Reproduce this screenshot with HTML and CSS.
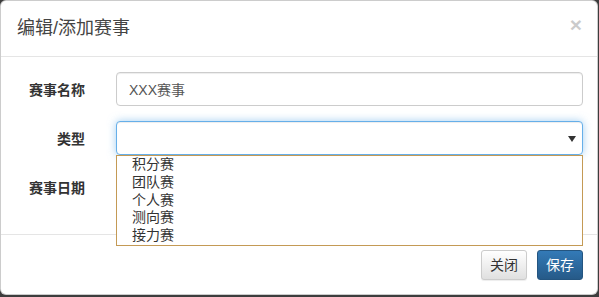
FILE: index.html
```html
<!DOCTYPE html>
<html lang="zh-CN">
<head>
  <meta charset="UTF-8">
  <title>编辑/添加赛事</title>
  <link rel="stylesheet" href="styles.css">
</head>
<body>
  <div class="modal">
    <div class="modal-header">
      <h4 class="modal-title">编辑/添加赛事</h4>
      <span class="close">&times;</span>
    </div>
    <form class="modal-body">
      <div class="form-group">
        <label class="control-label">赛事名称</label>
        <input class="form-control" type="text" value="XXX赛事">
      </div>
      <div class="form-group">
        <label class="control-label">类型</label>
        <div class="select-wrap">
          <div class="form-control focused"></div>
          <ul class="dropdown">
            <li>积分赛</li>
            <li>团队赛</li>
            <li>个人赛</li>
            <li>测向赛</li>
            <li>接力赛</li>
          </ul>
        </div>
      </div>
      <div class="form-group">
        <label class="control-label">赛事日期</label>
        <input class="form-control" type="text">
      </div>
    </form>
    <div class="modal-footer">
      <button class="btn btn-default" type="button">关闭</button>
      <button class="btn btn-primary" type="button">保存</button>
    </div>
  </div>
</body>
</html>
```

FILE: styles.css
```css
* {
  box-sizing: border-box;
}
body {
  margin: 0;
  padding: 0 1px 2px 0;
  background: #3d3d3d;
  font-family: "Liberation Sans", "Noto Sans CJK SC", sans-serif;
  font-size: 14px;
  color: #333;
}
.modal {
  background-color: #fff;
  border: 1px solid rgba(0, 0, 0, 0.2);
  border-radius: 6px;
}
.modal-header {
  display: flex;
  justify-content: space-between;
  align-items: center;
  padding: 15px 15px 15px 16px;
  border-bottom: 1px solid #e5e5e5;
}
.modal-title {
  margin: 0;
  font-size: 18px;
  line-height: 25px;
  font-weight: normal;
  color: #444;
}
.close {
  font-size: 21px;
  font-weight: bold;
  line-height: 1;
  color: #000;
  opacity: 0.2;
  margin-top: -8px;
}
.modal-body {
  display: block;
  margin: 0;
  padding: 15px 14px 15px 0;
}
.form-group {
  display: grid;
  grid-template-columns: 84px 1fr;
  column-gap: 31px;
  align-items: center;
  margin-bottom: 15px;
}
.control-label {
  text-align: right;
  font-weight: bold;
  color: #333;
}
.form-control {
  display: block;
  width: 100%;
  height: 34px;
  padding: 6px 12px;
  font-family: inherit;
  font-size: 14px;
  color: #555;
  background-color: #fff;
  border: 1px solid #ccc;
  border-radius: 4px;
  box-shadow: inset 0 1px 1px rgba(0, 0, 0, 0.075);
}
.form-control.focused {
  border-color: #66afe9;
  box-shadow: inset 0 1px 1px rgba(0, 0, 0, 0.075), 0 0 8px rgba(102, 175, 233, 0.6);
}
.select-wrap {
  position: relative;
}
.select-wrap::after {
  content: "";
  position: absolute;
  right: 7px;
  top: 15px;
  border-left: 4px solid transparent;
  border-right: 4px solid transparent;
  border-top: 6px solid #333;
}
.dropdown {
  position: absolute;
  left: 0;
  right: 0;
  top: 34px;
  margin: 0;
  padding: 0;
  list-style: none;
  background: #fff;
  border: 1px solid #c49a55;
  z-index: 2;
}
.dropdown li {
  padding-left: 15px;
  height: 17.8px;
  line-height: 16px;
  font-size: 14px;
  color: #333;
}
.modal-footer {
  display: flex;
  justify-content: flex-end;
  gap: 10px;
  padding: 15px 14px 14px 15px;
  border-top: 1px solid #e5e5e5;
}
.btn {
  height: 30px;
  padding: 4px 8px;
  font-family: inherit;
  font-size: 14px;
  line-height: 20px;
  border-radius: 3px;
  border: 1px solid;
  cursor: pointer;
}
.btn-default {
  color: #333;
  border-color: #ccc;
  background-image: linear-gradient(to bottom, #fff 0%, #e0e0e0 100%);
  box-shadow: inset 0 1px 0 rgba(255, 255, 255, 0.15), 0 1px 1px rgba(0, 0, 0, 0.075);
}
.btn-primary {
  color: #fff;
  border-color: #245580;
  background-image: linear-gradient(to bottom, #337ab7 0%, #265a88 100%);
}
```
